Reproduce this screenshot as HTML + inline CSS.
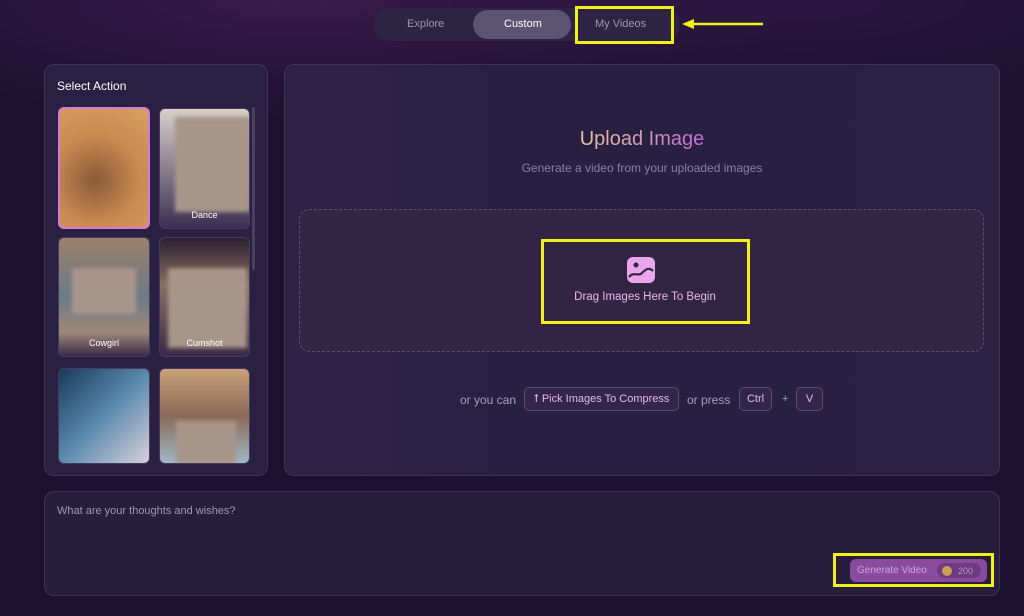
<!DOCTYPE html>
<html><head><meta charset="utf-8"><style>
*{box-sizing:border-box;margin:0;padding:0}
body{width:1024px;height:616px;overflow:hidden;position:relative;font-family:"Liberation Sans",sans-serif;
background:radial-gradient(ellipse 500px 120px at 300px 0,#3a1a4a,transparent),radial-gradient(ellipse 400px 100px at 800px 0,#2c1640,transparent),#1c1230;}
.abs{position:absolute}
.panel{position:absolute;border:1px solid #3d3358;border-radius:10px;background:#2a2042}
.tabs{left:373px;top:8px;width:307px;height:33px;border-radius:17px;background:#2c2442}
.tab{position:absolute;font-size:11px;color:#9e98b0;top:18px}
.ybox{position:absolute;border:3px solid #f2f21a}
.card{position:absolute;border-radius:6px;overflow:hidden;border:1px solid #4a3a60}
.lbl{position:absolute;bottom:8px;width:100%;text-align:center;color:#fff;font-size:9px}
.blur{position:absolute;background:#a8958a;filter:blur(2px)}
.key{position:absolute;top:387px;height:24px;border:1px solid #5a4878;border-radius:5px;background:#33264a;color:#e7b8ee;font-size:11px;line-height:22px;text-align:center}
</style></head><body>
<div class="abs tabs"></div>
<div class="abs" style="left:473px;top:10px;width:98px;height:29px;border-radius:15px;background:#5d5474"></div>
<div class="tab" style="left:407px">Explore</div>
<div class="tab" style="left:504px;color:#fff">Custom</div>
<div class="tab" style="left:595px">My Videos</div>
<div class="ybox" style="left:575px;top:6px;width:99px;height:38px"></div>
<svg class="abs" style="left:0;top:0" width="1024" height="616">
<g stroke="#f2f21a" stroke-width="2.5" fill="#f2f21a">
<line x1="763" y1="24" x2="692" y2="24"/><polygon points="682,24 694,19 694,29" stroke="none"/>
<line x1="797" y1="193" x2="760" y2="220"/><polygon points="751,227 757,214 765,223" stroke="none"/>
<line x1="728" y1="520" x2="805" y2="550"/><polygon points="816,555 802,554 806,544" stroke="none"/>
</g></svg>

<div class="panel" style="left:44px;top:64px;width:224px;height:412px"></div>
<div class="abs" style="left:57px;top:79px;color:#fff;font-size:12px">Select Action</div>
<div class="card" style="left:58px;top:107px;width:92px;height:122px;border:2px solid #d57ad8;background:radial-gradient(circle at 40% 60%,#8a5a3a,#c98a50 50%,#d8a060)"></div>
<div class="card" style="left:159px;top:108px;width:91px;height:121px;background:linear-gradient(#d8d0cc,#3a3050)"><div class="blur" style="left:15px;top:8px;width:76px;height:95px"></div><div class="lbl">Dance</div></div>
<div class="card" style="left:58px;top:237px;width:92px;height:120px;background:linear-gradient(#9a8068,#6a7a88 50%,#a08878 80%,#3a2a48)"><div class="blur" style="left:13px;top:30px;width:64px;height:46px"></div><div class="lbl">Cowgirl</div></div>
<div class="card" style="left:159px;top:237px;width:91px;height:120px;background:linear-gradient(#2a2030,#8a7060 40%,#3a2a48)"><div class="blur" style="left:8px;top:30px;width:79px;height:80px"></div><div class="lbl">Cumshot</div></div>
<div class="card" style="left:58px;top:368px;width:92px;height:96px;background:linear-gradient(135deg,#1a3a58,#5a8ab0 50%,#d8d0d8)"></div>
<div class="card" style="left:159px;top:368px;width:91px;height:96px;background:linear-gradient(#c8a078,#8a6a58 50%,#a0b8c8)"><div class="blur" style="left:16px;top:52px;width:60px;height:44px"></div></div>
<div class="abs" style="left:252px;top:107px;width:3px;height:163px;background:#4a4060;border-radius:2px"></div>

<div class="panel" style="left:284px;top:64px;width:716px;height:412px;background:linear-gradient(90deg,#2e2244,#272040 40%,#2a2042)"></div>
<div class="abs" style="left:284px;top:128px;width:716px;text-align:center;font-size:20px"><span style="background:linear-gradient(90deg,#eac79a,#c06ad8);-webkit-background-clip:text;color:transparent">Upload Image</span></div>
<div class="abs" style="left:284px;top:161px;width:716px;text-align:center;font-size:12px;color:#8a82a0">Generate a video from your uploaded images</div>
<div class="abs" style="left:299px;top:209px;width:685px;height:143px;border:1px dashed #5a4d72;border-radius:10px;background:#322544"></div>
<svg class="abs" style="left:627px;top:257px" width="28" height="26" viewBox="0 0 28 26"><rect x="0" y="0" width="28" height="26" rx="6" fill="#e9a6ea"/><circle cx="9" cy="8" r="2.5" fill="#322544"/><path d="M2 20 C7 14,11 20,15 16 S22 10,26 14" stroke="#322544" stroke-width="2.2" fill="none"/></svg>
<div class="abs" style="left:541px;top:291px;width:208px;text-align:center;font-size:11.5px;color:#e7b8ee">Drag Images Here To Begin</div>
<div class="ybox" style="left:541px;top:239px;width:209px;height:85px"></div>
<div class="abs" style="left:460px;top:393px;font-size:12px;color:#a8a0b8">or you can</div>
<div class="key" style="left:524px;width:155px">⭡ Pick Images To Compress</div>
<div class="abs" style="left:687px;top:393px;font-size:12px;color:#a8a0b8">or press</div>
<div class="key" style="left:739px;width:33px">Ctrl</div>
<div class="abs" style="left:782px;top:393px;font-size:11px;color:#a8a0b8">+</div>
<div class="key" style="left:796px;width:27px">V</div>

<div class="panel" style="left:44px;top:491px;width:956px;height:105px;background:#271e3e"></div>
<div class="abs" style="left:57px;top:505px;font-size:11px;color:#a098b0">What are your thoughts and wishes?</div>
<div class="ybox" style="left:833px;top:553px;width:161px;height:34px"></div>
<div class="abs" style="left:850px;top:559px;width:137px;height:23px;border-radius:6px;background:#8a4a9e"></div>
<div class="abs" style="left:857px;top:565px;font-size:10px;color:#c8a8d0">Generate Video</div>
<div class="abs" style="left:937px;top:563px;width:44px;height:15px;border-radius:8px;background:#6e3a82"></div>
<div class="abs" style="left:942px;top:566px;width:10px;height:10px;border-radius:5px;background:#c8a050"></div>
<div class="abs" style="left:958px;top:566px;font-size:9px;color:#b898c0">200</div>
</body></html>
